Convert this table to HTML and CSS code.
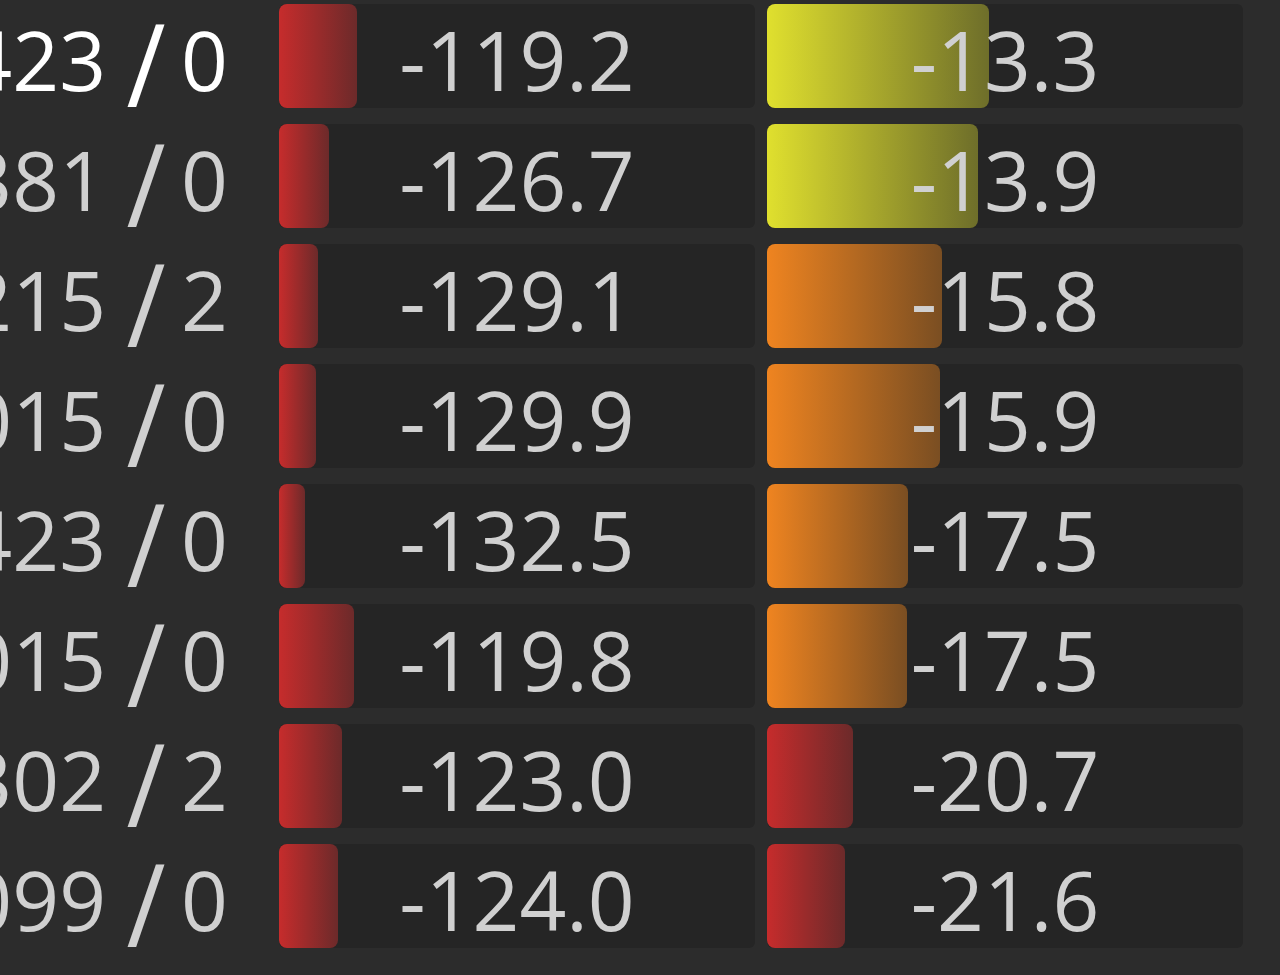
FILE: index.html
```html
<!DOCTYPE html>
<html lang="en">
<head>
  <meta charset="UTF-8" />
  <meta name="viewport" content="width=device-width, initial-scale=1.0" />
  <title>Signal table</title>
  <link rel="stylesheet" href="styles.css">
</head>
<body>
  <div class="table">
    <div class="row active">
      <div class="count"><span>1423<span class="sep">/</span>0</span></div>
      <div class="cell"><div class="bar red" style="width: 78px"></div><span class="val">-119.2</span></div>
      <div class="cell"><div class="bar yellow" style="width: 222px"></div><span class="val">-13.3</span></div>
    </div>
    <div class="row">
      <div class="count"><span>1381<span class="sep">/</span>0</span></div>
      <div class="cell"><div class="bar red" style="width: 50px"></div><span class="val">-126.7</span></div>
      <div class="cell"><div class="bar yellow" style="width: 211px"></div><span class="val">-13.9</span></div>
    </div>
    <div class="row">
      <div class="count"><span>1215<span class="sep">/</span>2</span></div>
      <div class="cell"><div class="bar red" style="width: 39px"></div><span class="val">-129.1</span></div>
      <div class="cell"><div class="bar orange" style="width: 175px"></div><span class="val">-15.8</span></div>
    </div>
    <div class="row">
      <div class="count"><span>1015<span class="sep">/</span>0</span></div>
      <div class="cell"><div class="bar red" style="width: 37px"></div><span class="val">-129.9</span></div>
      <div class="cell"><div class="bar orange" style="width: 173px"></div><span class="val">-15.9</span></div>
    </div>
    <div class="row">
      <div class="count"><span>1423<span class="sep">/</span>0</span></div>
      <div class="cell"><div class="bar red" style="width: 26px"></div><span class="val">-132.5</span></div>
      <div class="cell"><div class="bar orange" style="width: 141px"></div><span class="val">-17.5</span></div>
    </div>
    <div class="row">
      <div class="count"><span>1015<span class="sep">/</span>0</span></div>
      <div class="cell"><div class="bar red" style="width: 75px"></div><span class="val">-119.8</span></div>
      <div class="cell"><div class="bar orange" style="width: 140px"></div><span class="val">-17.5</span></div>
    </div>
    <div class="row">
      <div class="count"><span>1302<span class="sep">/</span>2</span></div>
      <div class="cell"><div class="bar red" style="width: 63px"></div><span class="val">-123.0</span></div>
      <div class="cell"><div class="bar red" style="width: 86px"></div><span class="val">-20.7</span></div>
    </div>
    <div class="row">
      <div class="count"><span>1099<span class="sep">/</span>0</span></div>
      <div class="cell"><div class="bar red" style="width: 59px"></div><span class="val">-124.0</span></div>
      <div class="cell"><div class="bar red" style="width: 78px"></div><span class="val">-21.6</span></div>
    </div>
  </div>
</body>
</html>
```

FILE: styles.css
```css
body {
  margin: 0;
  background-color: #2c2c2c;
  color: #d0d0d0;
  font-family: "Open Sans", "Noto Sans", sans-serif;
  font-size: 82px;
  line-height: 98px;
  overflow: hidden;
}
.table {
  display: flex;
  flex-direction: column;
  gap: 16px;
  padding-top: 4px;
}
.row {
  display: grid;
  grid-template-columns: 267px 476px 476px;
  grid-template-rows: 104px;
  column-gap: 12px;
}
.count {
  display: flex;
  justify-content: flex-end;
  padding-right: 39px;
  padding-top: 6px;
  white-space: nowrap;
  min-width: 0;
}
.sep {
  display: inline-block;
  margin: 0 20px 0 25px;
  transform: translateY(3px) scale(1.3, 1.4);
}
.active .count {
  color: #ffffff;
}
.cell {
  display: grid;
  grid-template-rows: 104px;
  background-color: #252525;
  border-radius: 6px;
}
.cell > * {
  grid-area: 1 / 1;
}
.bar {
  border-radius: 8px;
}
.val {
  justify-self: center;
  padding-top: 6px;
  white-space: nowrap;
}
.red {
  background: linear-gradient(to right, #c62c2c, #6c2a2a);
}
.yellow {
  background: linear-gradient(to right, #e0e02e, #6e6e2a);
}
.orange {
  background: linear-gradient(to right, #ef8420, #7a4e22);
}
```
